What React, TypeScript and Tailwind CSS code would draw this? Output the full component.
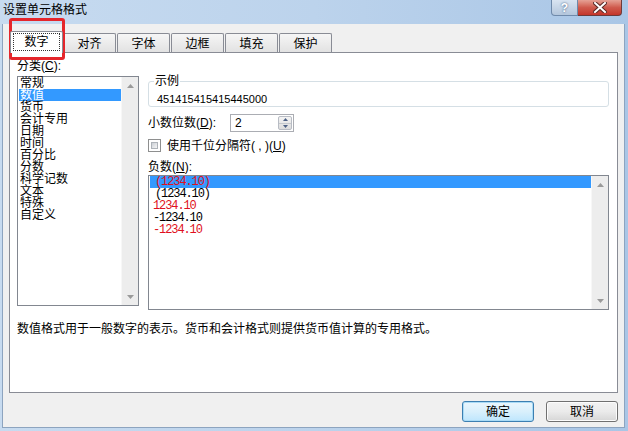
import React from "react";

const TABS = ["对齐", "字体", "边框", "填充", "保护"];

const CATEGORIES = [
  "常规",
  "数值",
  "货币",
  "会计专用",
  "日期",
  "时间",
  "百分比",
  "分数",
  "科学记数",
  "文本",
  "特殊",
  "自定义",
];

const NEGATIVES = [
  { text: "(1234.10)", red: true, pad: "pl-[5px]" },
  { text: "(1234.10)", red: false, pad: "pl-[5px]" },
  { text: "1234.10", red: true, pad: "pl-[3px]" },
  { text: "-1234.10", red: false, pad: "pl-[3px]" },
  { text: "-1234.10", red: true, pad: "pl-[3px]" },
];

function Arrow({ up }: { up?: boolean }) {
  return (
    <svg width="7" height="4" viewBox="0 0 7 4">
      <path d={up ? "M0 4 L3.5 0 L7 4 Z" : "M0 0 L3.5 4 L7 0 Z"} fill="#9a9a9a" />
    </svg>
  );
}

function ScrollBar() {
  return (
    <div className="w-[17px] h-full flex flex-col bg-[#ededed] border-l border-[#f7f7f7]">
      <div className="h-[17px] flex items-center justify-center">
        <Arrow up />
      </div>
      <div className="flex-1" />
      <div className="h-[17px] flex items-center justify-center">
        <Arrow />
      </div>
    </div>
  );
}

function Mn({ k }: { k: string }) {
  // mnemonic letter, e.g. (C)
  return (
    <span>
      (<span className="underline underline-offset-1">{k}</span>)
    </span>
  );
}

function Button({ label, primary }: { label: string; primary?: boolean }) {
  return (
    <div
      className={
        "w-[72px] h-[21px] rounded-[3px] border flex items-center justify-center text-[12px] leading-[12px] text-black " +
        (primary
          ? "border-[#3c7fb1] bg-gradient-to-b from-[#eaf6fd] via-[#d9f0fc] to-[#bee6fd] shadow-[inset_0_0_0_1px_#a9dbf6]"
          : "border-[#707070] bg-gradient-to-b from-[#f2f2f2] via-[#ebebeb] to-[#d6d6d6] shadow-[inset_0_0_0_1px_#fcfcfc]")
      }
    >
      {label}
    </div>
  );
}

export default function App() {
  return (
    <div className="relative w-[628px] h-[431px] overflow-hidden flex flex-col bg-gradient-to-r from-[#c7dbf0] via-[#bcd3ec] to-[#a9c6e6] font-['Liberation_Sans','Noto_Sans_CJK_SC',sans-serif] text-black">
      {/* Title bar */}
      <div className="h-[24px] flex items-start justify-between shrink-0">
        <div className="pl-[3px] pt-[4px] text-[12px] leading-[12px] text-black">设置单元格格式</div>
        <div className="flex mr-[6px]">
          <div className="w-[27px] h-[16px] rounded-bl-[4px] border border-t-0 border-[#6f8aab] bg-gradient-to-b from-[#d9e4f1] to-[#b3c6dc] flex items-center justify-center text-white text-[12px] font-bold leading-[12px] [text-shadow:0_0_2px_#2e4a70]">
            ?
          </div>
          <div className="w-[44px] h-[16px] rounded-br-[4px] border border-t-0 border-l-0 border-[#6d3a3a] bg-gradient-to-b from-[#e5a195] via-[#cf5a4d] to-[#c4352a] flex items-center justify-center">
            <svg width="14" height="11" viewBox="0 0 14 11">
              <path d="M2 1 L12 10 M12 1 L2 10" stroke="#5a2a26" strokeWidth="4" strokeLinecap="square" />
              <path d="M2 1 L12 10 M12 1 L2 10" stroke="#ffffff" strokeWidth="2" strokeLinecap="square" />
            </svg>
          </div>
        </div>
      </div>

      {/* Window body */}
      <div className="flex-1 ml-[2px] mr-[3px] mb-[3px] border border-t-0 border-[#8da4bf] bg-[#f0f0f0] flex flex-col text-[12px] leading-[12px]">
        {/* Tabs */}
        <div className="h-[28px] pl-[7px] flex items-end shrink-0">
          <div className="relative z-10 w-[53px] h-[22px] -mb-px bg-white border border-b-0 border-[#898c95] rounded-t-[2px] flex items-start justify-center pt-px">
            <div className="w-[47px] h-[18px] border border-dotted border-[#333] flex items-center justify-center">
              数字
            </div>
          </div>
          <div className="flex gap-px">
            {TABS.map((t) => (
              <div
                key={t}
                className="w-[53px] h-[19px] border border-b-0 border-[#898c95] rounded-t-[2px] bg-gradient-to-b from-[#f6f6f6] to-[#e2e2e2] flex items-center justify-center pt-px"
              >
                {t}
              </div>
            ))}
          </div>
        </div>

        {/* Tab panel */}
        <div className="ml-[6px] w-[609px] h-[341px] bg-white border border-[#898c95] flex flex-col shrink-0">
          <div className="flex pl-[7px] pt-[7px] gap-[9px]">
            {/* Category list */}
            <div className="w-[122px] flex flex-col">
              <div className="h-[12px]">
                分类<Mn k="C" />:
              </div>
              <div className="mt-[4px] h-[230px] border border-[#828790] flex">
                <div className="flex-1 pl-px">
                  {CATEGORIES.map((c) => (
                    <div
                      key={c}
                      className={
                        "h-[12px] leading-[12px] pl-px " +
                        (c === "数值" ? "bg-[#3399ff] text-white" : "")
                      }
                    >
                      {c}
                    </div>
                  ))}
                </div>
                <ScrollBar />
              </div>
            </div>

            {/* Right column */}
            <div className="w-[461px] flex flex-col">
              <div className="relative mt-[21px] h-[26px] border border-[#d5dfe5] rounded-[3px] pl-[8px] pt-[11px]">
                <div className="absolute -top-[7px] left-[5px] bg-white px-px">示例</div>
                <div className="text-[11px] leading-[12px] font-['Liberation_Sans',sans-serif]">451415415415445000</div>
              </div>

              <div className="mt-[7px] h-[18px] flex items-center">
                <div className="w-[82px]">
                  小数位数<Mn k="D" />:
                </div>
                <div className="w-[64px] h-[18px] border border-[#abadb3] flex items-center justify-between pl-[4px] pr-px">
                  <span className="text-[12px] font-['Liberation_Sans',sans-serif]">2</span>
                  <div className="w-[14px] h-[14px] flex flex-col border border-[#b8bcc4] rounded-[2px] bg-gradient-to-b from-[#f4f4f4] to-[#dcdcdc]">
                    <div className="flex-1 flex items-center justify-center border-b border-[#c4c8ce]">
                      <svg width="5" height="3" viewBox="0 0 5 3"><path d="M0 3 L2.5 0 L5 3 Z" fill="#4d6185" /></svg>
                    </div>
                    <div className="flex-1 flex items-center justify-center">
                      <svg width="5" height="3" viewBox="0 0 5 3"><path d="M0 0 L2.5 3 L5 0 Z" fill="#4d6185" /></svg>
                    </div>
                  </div>
                </div>
              </div>

              <div className="mt-[7px] h-[13px] flex items-center gap-[6px]">
                <div className="w-[13px] h-[13px] border border-[#8e8f8f] bg-white p-[2px]">
                  <div className="w-full h-full bg-gradient-to-br from-[#cbcfd5] to-[#f6f6f6] border border-[#aeb3b9]" />
                </div>
                <div>
                  使用千位分隔符( , )<Mn k="U" />
                </div>
              </div>

              <div className="mt-[9px] h-[12px]">
                负数<Mn k="N" />:
              </div>
              <div className="mt-[2px] h-[135px] border border-[#828790] flex">
                <div className="flex-1 pl-px">
                  {NEGATIVES.map((n, i) => (
                    <div
                      key={i}
                      className={
                        "h-[12px] leading-[12px] text-[12px] tracking-[-1.1px] font-['Liberation_Mono',monospace] " +
                        n.pad +
                        " " +
                        (i === 0 ? "bg-[#3399ff] " : "") +
                        (n.red ? "text-[#e01020]" : "text-black")
                      }
                    >
                      {n.text}
                    </div>
                  ))}
                </div>
                <ScrollBar />
              </div>
            </div>
          </div>

          <div className="mt-[13px] pl-[7px]">
            数值格式用于一般数字的表示。货币和会计格式则提供货币值计算的专用格式。
          </div>
        </div>

        {/* Buttons */}
        <div className="mt-[8px] pr-[6px] flex justify-end gap-[12px]">
          <Button label="确定" primary />
          <Button label="取消" />
        </div>
      </div>

      {/* red annotation around the selected tab */}
      <div className="absolute left-[9px] top-[18px] w-[56px] h-[42px] border-[3px] border-[#e5262b] rounded-[3px]" />
    </div>
  );
}
